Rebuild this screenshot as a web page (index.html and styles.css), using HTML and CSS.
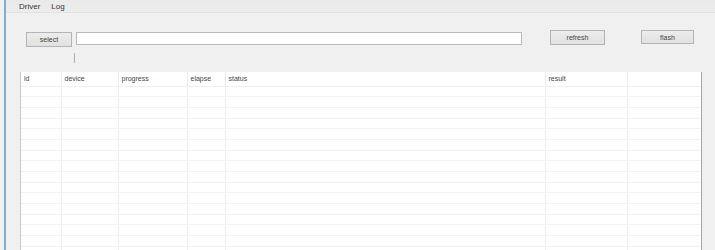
FILE: index.html
```html
<!DOCTYPE html>
<html lang="en">
<head>
  <meta charset="UTF-8" />
  <title>Flash Tool</title>
  <link rel="stylesheet" href="styles.css">
</head>
<body>
  <div class="window">
    <div class="edge"></div>
    <div class="main">
      <div class="menubar">
        <span class="menu-item">Driver</span>
        <span class="menu-item">Log</span>
      </div>

      <div class="toolbar">
        <button class="btn btn-select">select</button>
        <input class="path" type="text" />
        <button class="btn btn-refresh">refresh</button>
        <button class="btn btn-flash">flash</button>
      </div>

      <div class="hint"></div>

      <div class="grid">
        <table id="devices">
          <thead>
            <tr>
              <th class="c-id">id</th>
              <th class="c-device">device</th>
              <th class="c-progress">progress</th>
              <th class="c-elapse">elapse</th>
              <th class="c-status">status</th>
              <th class="c-result">result</th>
              <th></th>
            </tr>
          </thead>
          <tbody id="rows">
            <!-- filled by JS -->
          </tbody>
        </table>
      </div>
    </div>
  </div>

  <script>
    const rows = document.getElementById("rows");
    for (let i = 0; i < 16; i++) {
      const tr = document.createElement("tr");
      for (let j = 0; j < 7; j++) {
        tr.appendChild(document.createElement("td"));
      }
      rows.appendChild(tr);
    }
  </script>
</body>
</html>
```

FILE: styles.css
```css
body {
  margin: 0;
  width: 715px;
  height: 250px;
  overflow: hidden;
  background: #f0f0f0;
  font-family: "Liberation Sans", Arial, sans-serif;
  color: #444;
}

.window {
  display: flex;
  height: 250px;
}

.edge {
  width: 2px;
  margin-left: 4px;
  background: #7ab1dc;
  flex-shrink: 0;
}

.main {
  flex: 1;
  display: flex;
  flex-direction: column;
  min-width: 0;
}

.menubar {
  height: 12px;
  display: flex;
  align-items: center;
  gap: 11px;
  padding-left: 13px;
  background: linear-gradient(#eaeaea, #ececec);
  border-bottom: 1px solid #e2e2e2;
  font-size: 8px;
  color: #333;
}

.toolbar {
  display: flex;
  align-items: flex-start;
  padding-left: 20px;
  margin-top: 17px;
  height: 18px;
}

.btn {
  font-family: "Liberation Sans", Arial, sans-serif;
  font-size: 7px;
  color: #444;
  background: linear-gradient(#ececec, #e1e1e1);
  border: 1px solid #b4b4b4;
  padding: 0;
  height: 15px;
}

.btn-select {
  width: 46px;
  margin-top: 2px;
}

.path {
  width: 446px;
  height: 13px;
  margin: 2px 0 0 4px;
  padding: 0;
  border: 1px solid #b9b9b9;
  background: #fff;
  box-sizing: border-box;
}

.btn-refresh {
  width: 55px;
  margin-left: 28px;
}

.btn-flash {
  width: 53px;
  height: 14px;
  margin-left: 36px;
}

.hint {
  width: 1px;
  height: 10px;
  margin: 5px 0 0 68px;
  background: #b0b0b0;
}

.grid {
  margin: 9px 13px 0 14px;
  flex: 1;
  background: #fff;
  border-left: 1px solid #c8c8c8;
  border-right: 1px solid #a8a8a8;
  overflow: hidden;
}

table {
  width: 100%;
  border-collapse: collapse;
  table-layout: fixed;
  font-size: 7px;
}

th {
  height: 14px;
  padding: 0 0 0 3px;
  text-align: left;
  font-weight: normal;
  color: #444;
  border-right: 1px solid #ebebeb;
  border-bottom: 1px solid #f0f0f0;
  box-sizing: border-box;
}

td {
  height: 10.7px;
  padding: 0;
  border-right: 1px solid #eeeeee;
  border-bottom: 1px solid #f3f3f3;
  box-sizing: border-box;
}

th:last-child,
td:last-child {
  border-right: none;
}

.c-id { width: 40px; }
.c-device { width: 57px; }
.c-progress { width: 69px; }
.c-elapse { width: 38px; }
.c-status { width: 320px; }
.c-result { width: 82px; }
```
